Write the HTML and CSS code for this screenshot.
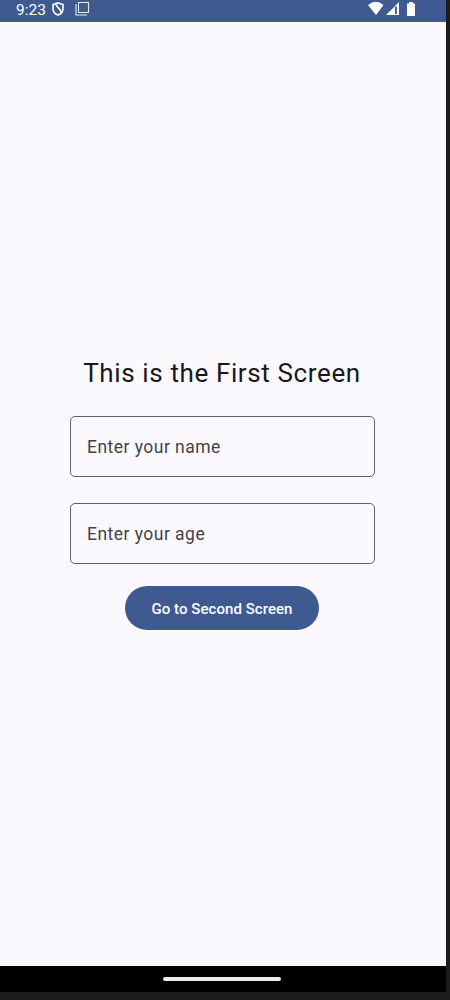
FILE: index.html
```
<!DOCTYPE html>
<html lang="en">
<head>
<meta charset="utf-8">
<title>First Screen</title>
<link rel="stylesheet" href="styles.css">
</head>
<body>
<div class="phone">
  <header class="status">
    <span class="clock">9:23</span>
    <svg class="shield" width="12" height="14" viewBox="0 0 12 14"><path d="M6 .9 11 2.6V6.5C11 9.5 9 12 6 13.1 3 12 1 9.5 1 6.5V2.6Z M4 2 C4 5 9 6.5 9 10.5" fill="none" stroke="#fff" stroke-width="1.6"/></svg>
    <svg class="copy" width="15" height="15" viewBox="0 0 15 15"><path d="M3.5 1.5H13.5V11.5H3.5Z M1 3V14H12" fill="none" stroke="#e4e8f4" stroke-width="1.1"/></svg>
    <svg class="signals" width="48" height="16" viewBox="0 0 48 16"><path d="M0 4Q8-2.5 15.5 4L8 14Z M18 14 31 1V14Z M39 2.5H41V1H45V2.5H47V15H39Z" fill="#fff"/><path d="M28 5.5V13" stroke="#3d568f" stroke-width="1.8"/></svg>
  </header>
  <main class="screen">
    <h1 class="title">This is the First Screen</h1>
    <div class="field">Enter your name</div>
    <div class="field">Enter your age</div>
    <button class="go">Go to Second Screen</button>
  </main>
  <footer class="nav"><div class="handle"></div></footer>
</div>
</body>
</html>
```
FILE: styles.css
```
* { box-sizing: border-box; }
body { margin: 0; background: #1c1c1d; font-family: Roboto, sans-serif; }
.phone { width: 446px; height: 992px; display: flex; flex-direction: column; }
.status { height: 22px; background: #3f5a91; color: #fff; display: flex; align-items: flex-start; padding: 0 30px 0 16px; }
.clock { font-size: 15.5px; line-height: 20px; width: 36px; }
.shield { margin-top: 2px; }
.copy { margin: 1px 0 0 11px; }
.signals { margin: 1px 0 0 auto; }
.screen { flex: 1; background: #fbf9fd; display: flex; flex-direction: column; align-items: center; padding: 334px 2px 0 0; }
.title { margin: 0 0 26px; font-size: 26px; line-height: 34px; font-weight: 400; letter-spacing: .62px; color: #18181c; white-space: nowrap; }
.field { width: 305px; height: 61px; margin-bottom: 26px; border: 1px solid #666262; border-radius: 5px; padding: 1px 16.5px 0; font-size: 17.5px; line-height: 59px; letter-spacing: .47px; color: #434349; }
.go { width: 194px; height: 44px; margin-top: -4px; padding: 2px 0 0; border: 0; border-radius: 22px; background: #3f5a91; color: #fff; font: 500 15px/42px Roboto, sans-serif; letter-spacing: .05px; white-space: nowrap; }
.nav { height: 26px; background: #000; display: flex; align-items: center; justify-content: center; padding-right: 2px; }
.handle { width: 118px; height: 4px; border-radius: 2px; background: #eeecef; }
```
